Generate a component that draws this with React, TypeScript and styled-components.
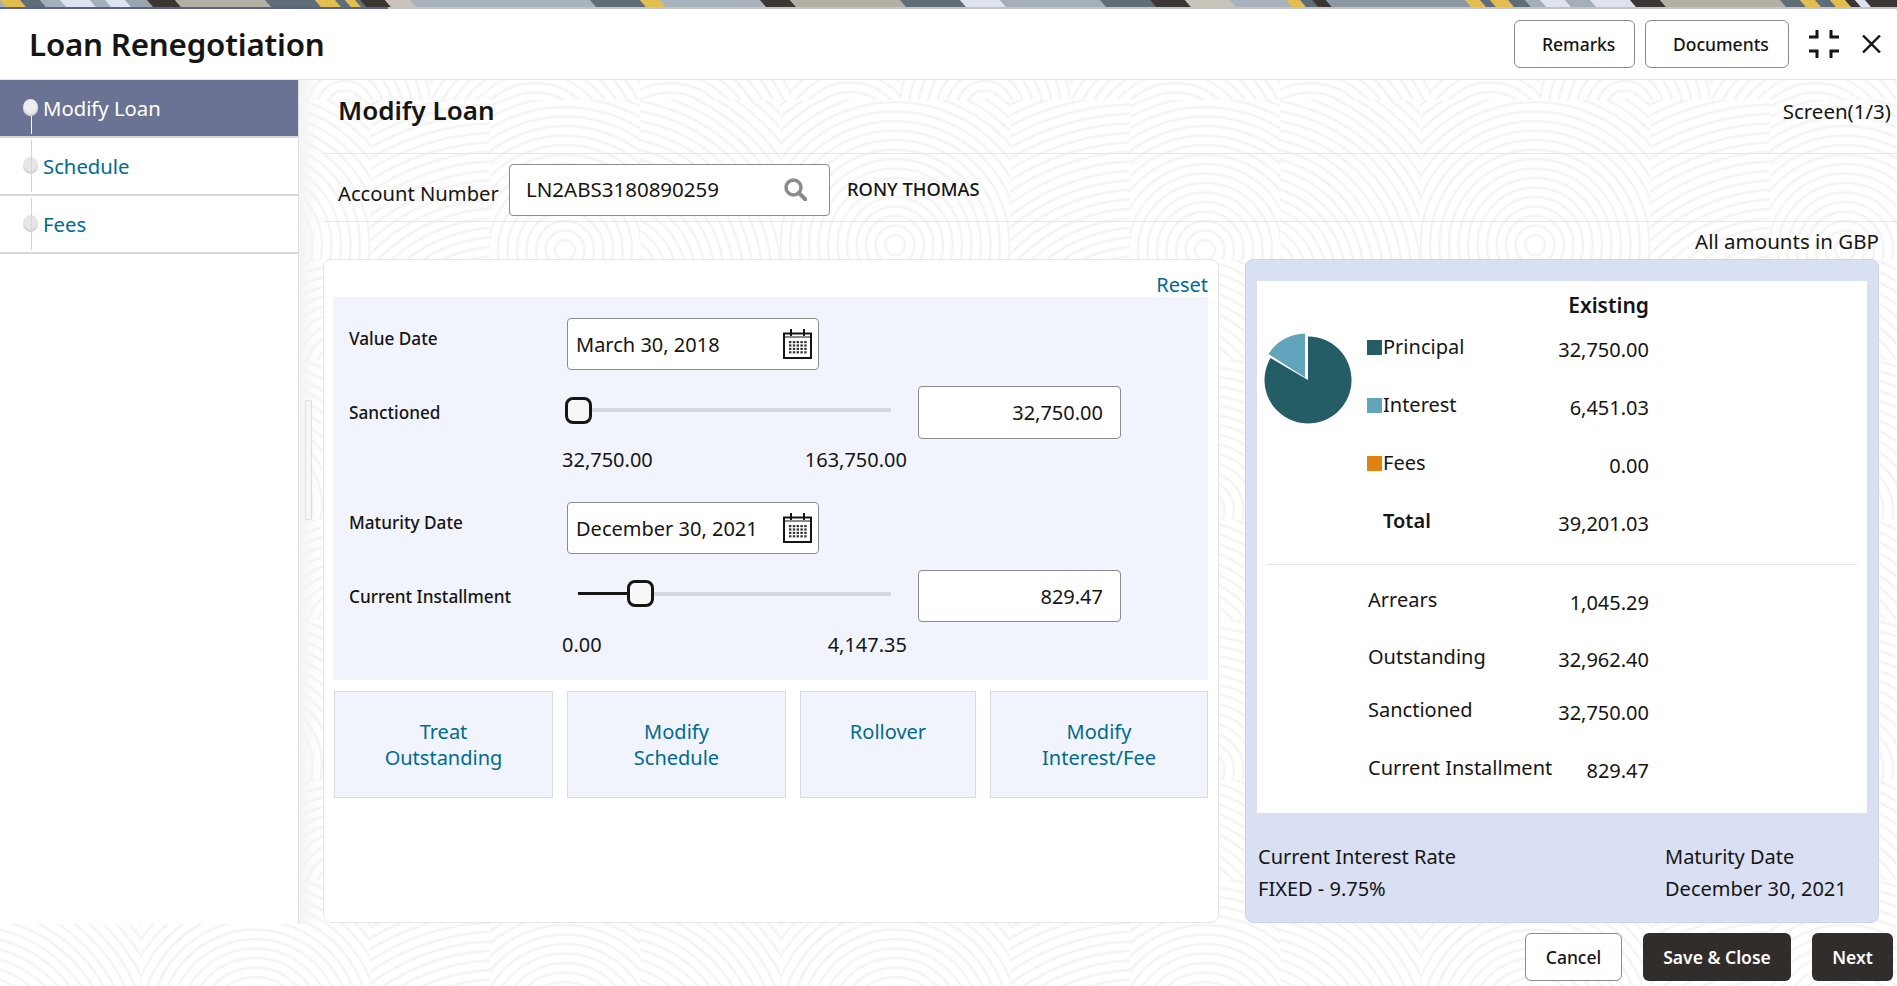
import React from "react";
import styled, { createGlobalStyle } from "styled-components";

const TEXT = "#161513";
const LINK = "#006b8f";
const FONT = `"Noto Sans", "Open Sans", sans-serif`;

// faint fingerprint tile used behind the whole page
const cell = (x: number, y: number, w: number, h: number, cx: number, cy: number) => {
  let rings = "";
  for (let r = 10; r < 340; r += 9.5) {
    rings += `<circle cx='${cx}' cy='${cy}' r='${r}'/>`;
  }
  return `<svg x='${x}' y='${y}' width='${w}' height='${h}'>${rings}</svg>`;
};

const tileSvg =
  `<svg xmlns='http://www.w3.org/2000/svg' width='640' height='260'><g fill='none' stroke='#f4f4f4' stroke-width='2.6'>` +
  cell(0, 0, 150, 100, 30, 150) +
  cell(150, 0, 110, 100, 60, 140) +
  cell(260, 0, 170, 100, 85, 110) +
  cell(430, 0, 210, 100, 105, 150) +
  cell(0, 100, 140, 160, -30, 180) +
  cell(140, 100, 230, 160, 115, 145) +
  cell(370, 100, 120, 160, 130, 280) +
  cell(490, 100, 150, 160, 75, 150) +
  `</g></svg>`;

const tileUrl = `url("data:image/svg+xml,${encodeURIComponent(tileSvg)}")`;

const GlobalStyle = createGlobalStyle`
  * {
    box-sizing: border-box;
  }
  html, body {
    margin: 0;
    padding: 0;
    background: #fff;
    overflow: hidden;
  }
  body {
    font-family: ${FONT};
    color: ${TEXT};
    font-size: 20px;
  }
`;

const Page = styled.div`
  width: 1897px;
  height: 986px;
  display: flex;
  flex-direction: column;
  overflow: hidden;
  background-color: #fff;
  background-image: ${tileUrl};
`;

const Strip = styled.svg`
  display: block;
  width: 1897px;
  height: 7px;
  flex: none;
`;

const Progress = styled.div`
  height: 2px;
  flex: none;
  background: #c4c4c4;

  &::before {
    content: "";
    display: block;
    width: 388px;
    height: 2px;
    background: #5a6488;
  }
`;

const Header = styled.header`
  height: 71px;
  flex: none;
  display: flex;
  align-items: center;
  padding: 0 16px 0 29px;
  background: #fff;
  border-bottom: 1px solid #e4e4e4;
  border-radius: 5px 5px 0 0;
`;

const AppTitle = styled.h1`
  flex: 1;
  margin: 0;
  font-size: 31.3px;
  font-weight: 600;
  line-height: 40px;
  letter-spacing: -0.2px;
`;

const OutlineButton = styled.button<{ $width?: number; $left?: number }>`
  width: ${(p) => p.$width ?? 97}px;
  height: 48px;
  padding: 0 0 0 ${(p) => p.$left ?? 0}px;
  margin: 0;
  font-family: ${FONT};
  font-size: 17.5px;
  font-weight: 500;
  text-align: ${(p) => (p.$left ? "left" : "center")};
  color: ${TEXT};
  background: #fff;
  border: 1px solid #8c8b8a;
  border-radius: 6px;
`;

const HeaderButtons = styled.div`
  display: flex;
  gap: 10px;
`;

const CompressIcon = styled.svg`
  margin-left: 20px;
  flex: none;
`;

const CloseIcon = styled.svg`
  margin-left: 23px;
  flex: none;
`;

const Body = styled.div`
  flex: 1;
  min-height: 0;
  display: flex;
`;

const Sidebar = styled.nav`
  width: 299px;
  flex: none;
  background: #fff;
  border-right: 1px solid #dcdfe3;
`;

const Step = styled.div<{ $active?: boolean }>`
  position: relative;
  height: 58px;
  display: flex;
  align-items: center;
  padding: 0 0 0 43px;
  font-size: 20.3px;
  color: ${(p) => (p.$active ? "#fff" : LINK)};
  background: ${(p) => (p.$active ? "#6b7394" : "#fff")};
  border-bottom: 2px solid #d8d8d8;

  &::before {
    content: "";
    position: absolute;
    left: 23px;
    top: 19px;
    width: 15px;
    height: 17px;
    border-radius: 50%;
    background: ${(p) => (p.$active ? "#ededed" : "#e6e6e6")};
    box-shadow: inset 0 -2px 2px #d2d2d2;
  }

  &::after {
    content: "";
    position: absolute;
    left: 31px;
    top: ${(p) => (p.$active ? "36px" : "2px")};
    bottom: 2px;
    width: 1px;
    background: ${(p) => (p.$active ? "#fff" : "#d4d4d4")};
  }
`;

const Main = styled.main`
  position: relative;
  flex: 1;
  min-width: 0;
  padding-left: 24px;
  background: linear-gradient(to right, #f4f4f4, rgba(244, 244, 244, 0) 22px);
`;

const ScrollThumb = styled.div`
  position: absolute;
  left: 6px;
  top: 320px;
  width: 7px;
  height: 120px;
  background: #f7f7f7;
  border: 1px solid #dedede;
  border-radius: 2px;
`;

const TitleRow = styled.div`
  height: 74px;
  display: flex;
  align-items: center;
  justify-content: space-between;
  padding: 0 6px 14px 15px;
  border-bottom: 1px solid #e6e6e6;
`;

const PageTitle = styled.h2`
  margin: 0;
  font-size: 26px;
  font-weight: 600;
  line-height: 32px;
`;

const ScreenCount = styled.span`
  font-size: 20.5px;
  line-height: 26px;
  margin-top: 2px;
`;

const PlainText = styled.span`
  font-size: 20.5px;
  line-height: 26px;
`;

const AccountRow = styled.div`
  height: 68px;
  display: flex;
  align-items: center;
  padding: 5px 0 0 15px;
  border-bottom: 1px solid #e6e6e6;
`;

const AccountLabel = styled.label`
  width: 160px;
  font-size: 20.2px;
  line-height: 26px;
  margin: 5px 11px 0 0;
  white-space: nowrap;
`;

const Field = styled.div<{ $width: number; $height?: number; $align?: string }>`
  width: ${(p) => p.$width}px;
  height: ${(p) => p.$height ?? 52}px;
  flex: none;
  display: flex;
  align-items: center;
  justify-content: ${(p) => p.$align ?? "space-between"};
  background: #fff;
  border: 1px solid #8c8b8a;
  border-radius: 4px;
  white-space: nowrap;
`;

const AccountField = styled(Field)`
  padding: 0 22px 2px 16px;
  font-size: 20.5px;
`;

const Customer = styled.span`
  margin: 0 0 2px 17px;
  font-size: 18.3px;
  font-weight: 500;
  line-height: 24px;
`;

const AmountNote = styled.div`
  height: 37px;
  display: flex;
  align-items: center;
  justify-content: flex-end;
  padding: 1px 18px 0 0;
`;

const Panels = styled.div`
  display: flex;
  gap: 26px;
  padding-right: 18px;
`;

const LeftCard = styled.section`
  width: 896px;
  height: 664px;
  flex: none;
  padding: 0 10px 0 9px;
  background: #fff;
  border: 1px solid #e6e6e6;
  border-radius: 8px;
`;

const ResetRow = styled.div`
  height: 37px;
  display: flex;
  align-items: flex-end;
  justify-content: flex-end;
`;

const ResetLink = styled.a`
  font-size: 20px;
  line-height: 24px;
  color: ${LINK};
`;

const FormPanel = styled.div`
  height: 383px;
  padding: 21px 16px 0;
  background: #f1f4fc;
`;

const FieldRow = styled.div<{ $height: number; $gap?: number }>`
  display: grid;
  grid-template-columns: 218px 351px 203px;
  align-items: center;
  height: ${(p) => p.$height}px;
  margin-bottom: ${(p) => p.$gap ?? 0}px;
`;

const FieldLabel = styled.label<{ $lift?: number }>`
  font-size: 17.2px;
  font-weight: 500;
  line-height: 24px;
  margin-bottom: ${(p) => p.$lift ?? 0}px;
  white-space: nowrap;
`;

const DateField = styled(Field)`
  padding: 0 6px 0 8px;
  font-size: 20px;
`;

const AmountField = styled(Field)`
  padding: 0 17px 0 0;
  font-size: 20px;
`;

const Slider = styled.div<{ $inset: number }>`
  width: ${(p) => 326 - p.$inset}px;
  display: flex;
  align-items: center;
  margin: 0 0 5px ${(p) => p.$inset - 2.5}px;
`;

const SliderFill = styled.div<{ $width: number }>`
  width: ${(p) => p.$width}px;
  height: 3px;
  background: ${TEXT};
`;

const SliderHandle = styled.div`
  width: 27px;
  height: 27px;
  flex: none;
  background: #f8f8f8;
  border: 3px solid ${TEXT};
  border-radius: 8px;
`;

const SliderRest = styled.div`
  flex: 1;
  height: 4px;
  background: #d3d6df;
`;

const RangeRow = styled.div<{ $top: number; $gap: number }>`
  display: flex;
  justify-content: space-between;
  width: 345px;
  height: 22px;
  margin: ${(p) => p.$top}px 0 ${(p) => p.$gap}px 213px;
  font-size: 20px;
  line-height: 22px;
`;

const Actions = styled.div`
  display: flex;
  gap: 14px;
  margin: 11px 0 0 1px;
`;

const ActionButton = styled.button<{ $width: number }>`
  width: ${(p) => p.$width}px;
  height: 107px;
  padding: 0 8px;
  display: block;
  font-family: ${FONT};
  font-size: 20px;
  line-height: 26px;
  text-align: center;
  color: ${LINK};
  background: #f1f4fc;
  border: 1px solid #d8dbe8;

  & > span {
    display: block;
    height: 52px;
  }
`;

const RightCard = styled.section`
  width: 634px;
  height: 664px;
  flex: none;
  padding: 21px 11px 0;
  background: #dae0f3;
  border: 1px solid #ccd3ea;
  border-radius: 8px;
`;

const SummaryGrid = styled.div`
  height: 532px;
  display: grid;
  grid-template-columns: 110px 190px 92px 1fr;
  grid-template-rows: 27px 58px 58px 58px 57px 22px 58px 56px 50px 66px;
  padding: 10px 9px 0 0;
  background: #fff;
  font-size: 20px;
`;

const ExistingHead = styled.div`
  grid-column: 2 / 4;
  grid-row: 1;
  align-self: start;
  height: 26px;
  margin-top: -1px;
  text-align: right;
  font-size: 21px;
  font-weight: 600;
  line-height: 30px;
`;

const Pie = styled.svg`
  grid-column: 1;
  grid-row: 2 / 5;
  margin: 15px 0 0 7px;
`;

const SummaryLabel = styled.div<{ $row: number; $bold?: boolean; $inset?: number }>`
  grid-column: 2;
  grid-row: ${(p) => p.$row};
  align-self: center;
  display: flex;
  align-items: center;
  padding-left: ${(p) => p.$inset ?? 1}px;
  font-weight: ${(p) => (p.$bold ? 600 : 400)};
  line-height: 26px;
  white-space: nowrap;
`;

const SummaryValue = styled.div<{ $row: number }>`
  grid-column: 3;
  grid-row: ${(p) => p.$row};
  align-self: center;
  padding-top: 6px;
  text-align: right;
  line-height: 26px;
  white-space: nowrap;
`;

const Swatch = styled.i<{ $color: string }>`
  width: 15px;
  height: 15px;
  margin: 0 1px 0 -1px;
  flex: none;
  background: ${(p) => p.$color};
`;

const Divider = styled.hr`
  grid-column: 1 / -1;
  grid-row: 6;
  align-self: end;
  width: 590px;
  margin: 0 0 6px 10px;
  border: 0;
  border-top: 1px solid #e4e4e4;
`;

const RateFooter = styled.div`
  display: grid;
  grid-template-columns: 407px 1fr;
  padding: 28px 0 0 1px;
  font-size: 20px;
  line-height: 32px;
  white-space: nowrap;
`;

const Footer = styled.footer`
  height: 62px;
  flex: none;
  display: flex;
  justify-content: flex-end;
  gap: 21px;
  padding: 9px 4px 0 0;
`;

const DarkButton = styled.button<{ $width: number }>`
  width: ${(p) => p.$width}px;
  height: 48px;
  padding: 0;
  font-family: ${FONT};
  font-size: 17.5px;
  font-weight: 600;
  color: #fff;
  background: #312d2a;
  border: 0;
  border-radius: 6px;
`;

// colours of the decorative band along the top edge: [start, colour]
const bands: [number, string][] = [
  [0, "#e3bd4f"], [20, "#5e6d78"], [40, "#a5afba"], [60, "#dde4f0"], [90, "#a5afba"],
  [105, "#dde4f0"], [125, "#9aa5b0"], [147, "#3b3633"], [175, "#b5aea5"], [265, "#5e6d78"],
  [315, "#e3bd4f"], [335, "#5e6d78"], [345, "#e3bd4f"], [355, "#5e6d78"], [360, "#3b3633"],
  [385, "#c9c3ba"], [410, "#a9b3bf"], [590, "#5e6d78"], [640, "#e3bd4f"], [660, "#a9b3bf"],
  [760, "#3b3633"], [790, "#b5aea5"], [900, "#5e6d78"], [960, "#dde4f0"], [1000, "#a5afba"],
  [1100, "#5e6d78"], [1150, "#3b3633"], [1185, "#c9c3ba"], [1230, "#a9b3bf"], [1286, "#e3bd4f"],
  [1300, "#5e6d78"], [1312, "#3b3633"], [1326, "#8d98a5"], [1465, "#e3bd4f"], [1480, "#5e6d78"],
  [1490, "#e3bd4f"], [1508, "#5e6d78"], [1525, "#a5afba"], [1540, "#dde4f0"], [1565, "#a5afba"],
  [1590, "#dde4f0"], [1630, "#3b3633"], [1660, "#b5aea5"], [1780, "#5e6d78"], [1800, "#e3bd4f"],
  [1815, "#5e6d78"], [1830, "#e3bd4f"], [1845, "#3b3633"], [1855, "#dde4f0"], [1865, "#3b3633"],
];

function TopBand() {
  return (
    <Strip viewBox="0 0 1897 7" preserveAspectRatio="none">
      <rect width="1897" height="7" fill="#a5afba" />
      {bands.map(([start, color], i) => {
        const end = i + 1 < bands.length ? bands[i + 1][0] : 1905;
        return (
          <polygon
            key={start}
            points={`${start},0 ${end},0 ${end + 6},7 ${start + 6},7`}
            fill={color}
          />
        );
      })}
    </Strip>
  );
}

function CalendarIcon() {
  const dots: React.ReactNode[] = [];
  for (let row = 0; row < 4; row++) {
    for (let col = 0; col < 5; col++) {
      dots.push(
        <rect key={`${row}-${col}`} x={6 + col * 3.8} y={12 + row * 3.4} width="2.4" height="2.2" fill="#333" />
      );
    }
  }
  return (
    <svg width="29" height="30" viewBox="0 0 29 30">
      <rect x="1" y="4.5" width="27" height="24.5" fill="#fff" stroke={TEXT} strokeWidth="2" />
      <path d="M1 8h27" stroke={TEXT} strokeWidth="1" />
      <path d="M8 0v7M21 0v7" stroke={TEXT} strokeWidth="2" />
      {dots}
    </svg>
  );
}

function SearchIcon() {
  return (
    <svg width="23" height="23" viewBox="0 0 23 23" fill="none" stroke="#8a8a8a">
      <circle cx="9.5" cy="9.5" r="7.5" strokeWidth="3.4" />
      <path d="M15 15l6.5 6.5" strokeWidth="4" strokeLinecap="round" />
    </svg>
  );
}

function SliderControl({ inset, fill }: { inset: number; fill: number }) {
  return (
    <Slider $inset={inset}>
      <SliderFill $width={fill} />
      <SliderHandle />
      <SliderRest />
    </Slider>
  );
}

export default function App() {
  return (
    <Page>
      <GlobalStyle />
      <TopBand />
      <Progress />
      <Header>
        <AppTitle>Loan Renegotiation</AppTitle>
        <HeaderButtons>
          <OutlineButton $width={121} $left={27}>Remarks</OutlineButton>
          <OutlineButton $width={144} $left={27}>Documents</OutlineButton>
        </HeaderButtons>
        <CompressIcon width="30" height="28" viewBox="0 0 30 28" fill="none" stroke={TEXT} strokeWidth="3">
          <path d="M0 7H8V0M30 7H22V0M0 21H8V28M30 21H22V28" />
        </CompressIcon>
        <CloseIcon width="19" height="18" viewBox="0 0 19 18" fill="none" stroke={TEXT} strokeWidth="2.4">
          <path d="M1 0.5L18 17.5M18 0.5L1 17.5" />
        </CloseIcon>
      </Header>
      <Body>
        <Sidebar>
          <Step $active>Modify Loan</Step>
          <Step>Schedule</Step>
          <Step>Fees</Step>
        </Sidebar>
        <Main>
          <ScrollThumb />
          <TitleRow>
            <PageTitle>Modify Loan</PageTitle>
            <ScreenCount>Screen(1/3)</ScreenCount>
          </TitleRow>
          <AccountRow>
            <AccountLabel>Account Number</AccountLabel>
            <AccountField $width={321}>
              LN2ABS3180890259
              <SearchIcon />
            </AccountField>
            <Customer>RONY THOMAS</Customer>
          </AccountRow>
          <AmountNote>
            <PlainText>All amounts in GBP</PlainText>
          </AmountNote>
          <Panels>
            <LeftCard>
              <ResetRow>
                <ResetLink>Reset</ResetLink>
              </ResetRow>
              <FormPanel>
                <FieldRow $height={52} $gap={16}>
                  <FieldLabel $lift={10}>Value Date</FieldLabel>
                  <DateField $width={252}>
                    March 30, 2018
                    <CalendarIcon />
                  </DateField>
                </FieldRow>
                <FieldRow $height={53}>
                  <FieldLabel>Sanctioned</FieldLabel>
                  <SliderControl inset={0} fill={0} />
                  <AmountField $width={203} $height={53} $align="flex-end">
                    32,750.00
                  </AmountField>
                </FieldRow>
                <RangeRow $top={10} $gap={31}>
                  <span>32,750.00</span>
                  <span>163,750.00</span>
                </RangeRow>
                <FieldRow $height={52} $gap={16}>
                  <FieldLabel $lift={10}>Maturity Date</FieldLabel>
                  <DateField $width={252}>
                    December 30, 2021
                    <CalendarIcon />
                  </DateField>
                </FieldRow>
                <FieldRow $height={52}>
                  <FieldLabel $lift={-2}>Current Installment</FieldLabel>
                  <SliderControl inset={13} fill={49} />
                  <AmountField $width={203} $align="flex-end">
                    829.47
                  </AmountField>
                </FieldRow>
                <RangeRow $top={12} $gap={0}>
                  <span>0.00</span>
                  <span>4,147.35</span>
                </RangeRow>
              </FormPanel>
              <Actions>
                <ActionButton $width={219}>
                  <span>
                    Treat
                    <br />
                    Outstanding
                  </span>
                </ActionButton>
                <ActionButton $width={219}>
                  <span>
                    Modify
                    <br />
                    Schedule
                  </span>
                </ActionButton>
                <ActionButton $width={176}>
                  <span>Rollover</span>
                </ActionButton>
                <ActionButton $width={218}>
                  <span>
                    Modify
                    <br />
                    Interest/Fee
                  </span>
                </ActionButton>
              </Actions>
            </LeftCard>
            <RightCard>
              <SummaryGrid>
                <ExistingHead>Existing</ExistingHead>
                <Pie width="90" height="92" viewBox="0 0 90 92">
                  <path d="M44 47L44 3.5A43.5 43.5 0 1 1 6.5 25Z" fill="#255d66" />
                  <path d="M41 44.5L41 0.5A43.5 43.5 0 0 0 4.5 21Z" fill="#62a4bc" />
                </Pie>
                <SummaryLabel $row={2}>
                  <Swatch $color="#255d66" />
                  Principal
                </SummaryLabel>
                <SummaryValue $row={2}>32,750.00</SummaryValue>
                <SummaryLabel $row={3}>
                  <Swatch $color="#62a4bc" />
                  Interest
                </SummaryLabel>
                <SummaryValue $row={3}>6,451.03</SummaryValue>
                <SummaryLabel $row={4}>
                  <Swatch $color="#e08310" />
                  Fees
                </SummaryLabel>
                <SummaryValue $row={4}>0.00</SummaryValue>
                <SummaryLabel $row={5} $bold $inset={16}>
                  Total
                </SummaryLabel>
                <SummaryValue $row={5}>39,201.03</SummaryValue>
                <Divider />
                <SummaryLabel $row={7}>Arrears</SummaryLabel>
                <SummaryValue $row={7}>1,045.29</SummaryValue>
                <SummaryLabel $row={8}>Outstanding</SummaryLabel>
                <SummaryValue $row={8}>32,962.40</SummaryValue>
                <SummaryLabel $row={9}>Sanctioned</SummaryLabel>
                <SummaryValue $row={9}>32,750.00</SummaryValue>
                <SummaryLabel $row={10}>Current Installment</SummaryLabel>
                <SummaryValue $row={10}>829.47</SummaryValue>
              </SummaryGrid>
              <RateFooter>
                <div>Current Interest Rate</div>
                <div>Maturity Date</div>
                <div>FIXED - 9.75%</div>
                <div>December 30, 2021</div>
              </RateFooter>
            </RightCard>
          </Panels>
        </Main>
      </Body>
      <Footer>
        <OutlineButton>Cancel</OutlineButton>
        <DarkButton $width={148}>Save &amp; Close</DarkButton>
        <DarkButton $width={81}>Next</DarkButton>
      </Footer>
    </Page>
  );
}
